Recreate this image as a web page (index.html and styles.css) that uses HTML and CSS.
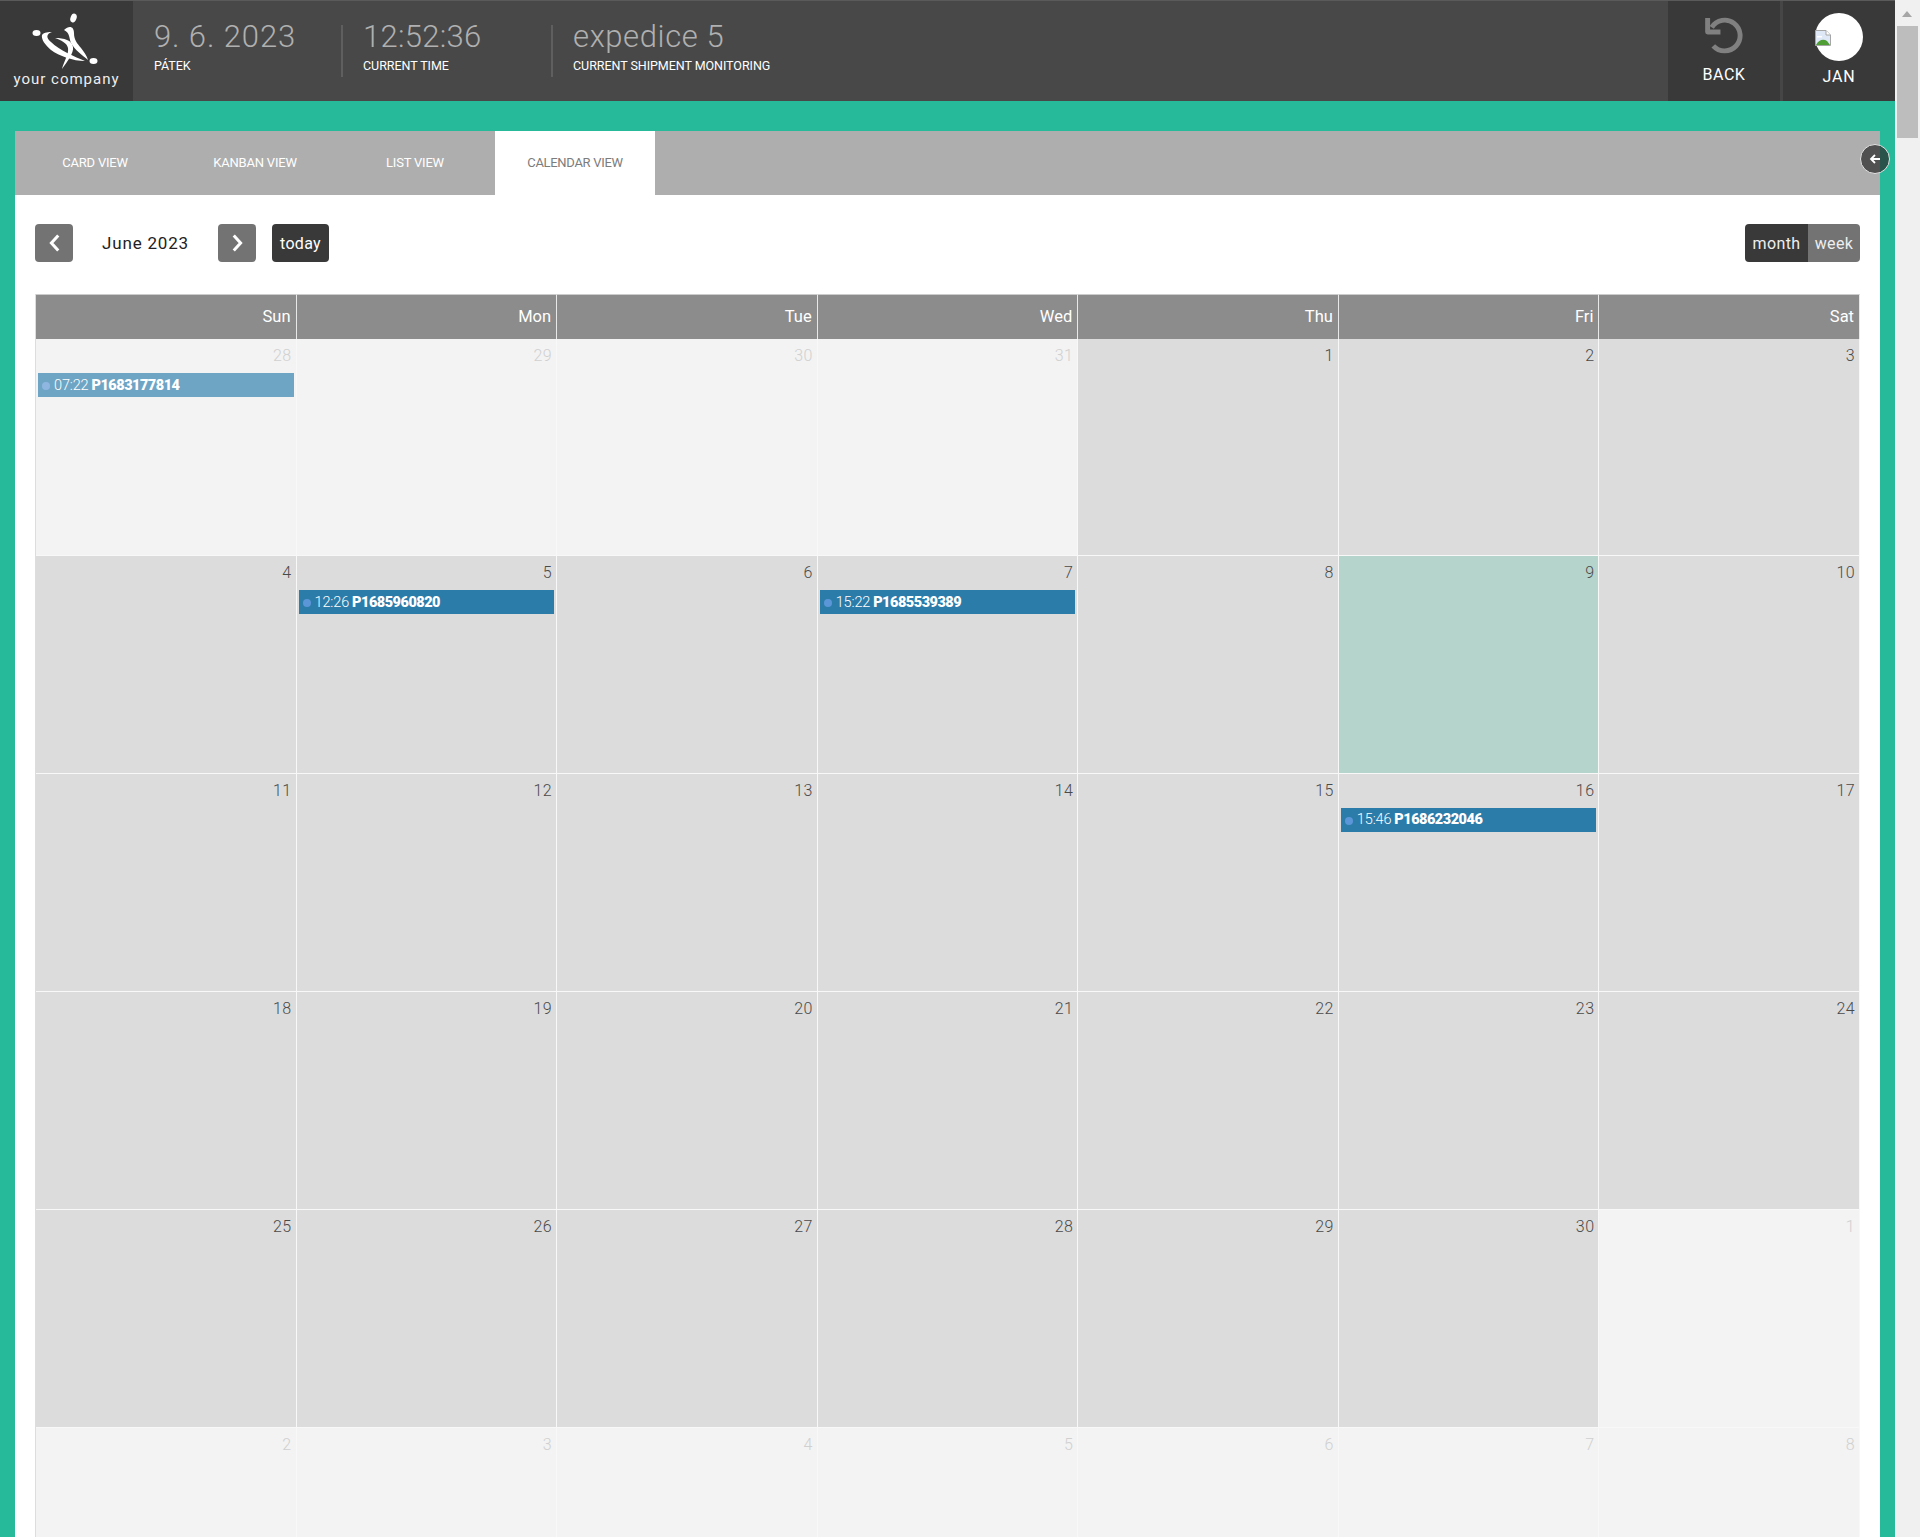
FILE: index.html
```html
<!DOCTYPE html>
<html lang="en">
<head>
<meta charset="utf-8">
<title>Calendar view</title>
<link rel="stylesheet" href="styles.css">
</head>
<body>
<div class="app">
  <div class="main">
    <header class="topbar">
      <div class="logo">
        <svg class="logo-mark" viewBox="0 0 70 56" width="70" height="56">
          <ellipse cx="42.5" cy="5" rx="3" ry="4.5" fill="#fff" transform="rotate(20 42.5 5)"/>
          <ellipse cx="5.5" cy="20" rx="4" ry="3" fill="#fff"/>
          <ellipse cx="62.5" cy="48" rx="4" ry="3" fill="#fff"/>
          <path d="M11 22 C13 19 18 19 21 19 C15 21 15 25 20 29 C28 37 44 44 54 48 C42 48 28 43 20 37 C14 32 10 26 11 22 Z" fill="#fff"/>
          <path d="M33 17 C38 12 43 13 43 20 C43 27 46 30 50 35 C53 39 56 43 57 47 C51 42 44 37 40 30 C38 25 39 20 33 17 Z" fill="#fff"/>
          <path d="M24 25 C33 25 41 27 42 34 C43 40 36 49 31 56 C33 48 38 41 37 35 C36 30 30 27 24 25 Z" fill="#fff"/>
        </svg>
        <span class="logo-text">your company</span>
      </div>
      <div class="info info-date">
        <div class="info-value">9. 6. 2023</div>
        <div class="info-label">PÁTEK</div>
      </div>
      <div class="info info-time">
        <div class="info-value">12:52:36</div>
        <div class="info-label">CURRENT TIME</div>
      </div>
      <div class="info info-line">
        <div class="info-value">expedice 5</div>
        <div class="info-label">CURRENT SHIPMENT MONITORING</div>
      </div>
      <div class="top-actions">
        <div class="action action-back">
          <svg viewBox="0 0 40 40" width="41" height="41" class="back-icon">
            <path d="M9.5 13 A15 15 0 1 1 11 31" fill="none" stroke="#808080" stroke-width="4.8"/>
            <path d="M5.5 4 V17.5 H18" fill="none" stroke="#808080" stroke-width="4.8" stroke-linejoin="round"/>
          </svg>
          <span class="action-label">BACK</span>
        </div>
        <div class="action action-user">
          <div class="avatar">
            <svg class="broken" viewBox="0 0 16 16" width="16" height="16">
              <path d="M.5.5 H11 L15.5 5 V15.5 H.5 Z" fill="#dfe8f7" stroke="#a6a6a6"/>
              <path d="M11 .5 V5 H15.5" fill="#fff" stroke="#a6a6a6"/>
              <path d="M1 15 C4 9 9 9 12 11 L15 15 Z" fill="#4f9d35"/>
              <path d="M2 6 h5 v1.5 h-5z" fill="#fff"/>
            </svg>
          </div>
          <span class="action-label">JAN</span>
        </div>
      </div>
    </header>

    <div class="content">
      <section class="panel">
        <nav class="tabs">
          <a class="tab">CARD VIEW</a>
          <a class="tab">KANBAN VIEW</a>
          <a class="tab">LIST VIEW</a>
          <a class="tab tab-active">CALENDAR VIEW</a>
        </nav>
        <button class="collapse" aria-label="Collapse">
          <svg viewBox="0 0 14 14" width="14" height="14"><path d="M12 7 H3 M7 3 L3 7 L7 11" fill="none" stroke="#fff" stroke-width="1.8"/></svg>
        </button>
        <div class="cal">
          <div class="toolbar">
            <button class="btn btn-nav"><svg viewBox="0 0 12 16" width="15" height="20"><path d="M9 2 L3.5 8 L9 14" fill="none" stroke="#fff" stroke-width="2.4"/></svg></button>
            <h2 class="cal-title">June 2023</h2>
            <button class="btn btn-nav"><svg viewBox="0 0 12 16" width="15" height="20"><path d="M3 2 L8.5 8 L3 14" fill="none" stroke="#fff" stroke-width="2.4"/></svg></button>
            <button class="btn btn-today">today</button>
            <div class="switch">
              <button class="sw sw-on">month</button>
              <button class="sw">week</button>
            </div>
          </div>
          <div class="grid">
            <div class="head">Sun</div><div class="head">Mon</div><div class="head">Tue</div><div class="head">Wed</div><div class="head">Thu</div><div class="head">Fri</div><div class="head">Sat</div>

            <div class="day off"><span class="num">28</span><div class="event past"><i class="dot"></i><span class="time">07:22</span><b>P1683177814</b></div></div>
            <div class="day off"><span class="num">29</span></div>
            <div class="day off"><span class="num">30</span></div>
            <div class="day off"><span class="num">31</span></div>
            <div class="day"><span class="num">1</span></div>
            <div class="day"><span class="num">2</span></div>
            <div class="day"><span class="num">3</span></div>

            <div class="day"><span class="num">4</span></div>
            <div class="day"><span class="num">5</span><div class="event"><i class="dot"></i><span class="time">12:26</span><b>P1685960820</b></div></div>
            <div class="day"><span class="num">6</span></div>
            <div class="day"><span class="num">7</span><div class="event"><i class="dot"></i><span class="time">15:22</span><b>P1685539389</b></div></div>
            <div class="day"><span class="num">8</span></div>
            <div class="day today"><span class="num">9</span></div>
            <div class="day"><span class="num">10</span></div>

            <div class="day"><span class="num">11</span></div>
            <div class="day"><span class="num">12</span></div>
            <div class="day"><span class="num">13</span></div>
            <div class="day"><span class="num">14</span></div>
            <div class="day"><span class="num">15</span></div>
            <div class="day"><span class="num">16</span><div class="event"><i class="dot"></i><span class="time">15:46</span><b>P1686232046</b></div></div>
            <div class="day"><span class="num">17</span></div>

            <div class="day"><span class="num">18</span></div>
            <div class="day"><span class="num">19</span></div>
            <div class="day"><span class="num">20</span></div>
            <div class="day"><span class="num">21</span></div>
            <div class="day"><span class="num">22</span></div>
            <div class="day"><span class="num">23</span></div>
            <div class="day"><span class="num">24</span></div>

            <div class="day"><span class="num">25</span></div>
            <div class="day"><span class="num">26</span></div>
            <div class="day"><span class="num">27</span></div>
            <div class="day"><span class="num">28</span></div>
            <div class="day"><span class="num">29</span></div>
            <div class="day"><span class="num">30</span></div>
            <div class="day off"><span class="num">1</span></div>

            <div class="day off"><span class="num">2</span></div>
            <div class="day off"><span class="num">3</span></div>
            <div class="day off"><span class="num">4</span></div>
            <div class="day off"><span class="num">5</span></div>
            <div class="day off"><span class="num">6</span></div>
            <div class="day off"><span class="num">7</span></div>
            <div class="day off"><span class="num">8</span></div>
          </div>
        </div>
      </section>
    </div>
  </div>
  <aside class="scrollbar">
    <div class="sb-arrow"></div>
    <div class="sb-thumb"></div>
  </aside>
</div>
</body>
</html>
```
FILE: styles.css
```css
* { box-sizing: border-box; }
html, body { margin: 0; height: 100%; overflow: hidden; }
body { font-family: Roboto, "Liberation Sans", sans-serif; color: #333; background: #f0f0f0; }
button { font-family: inherit; border: 0; padding: 0; cursor: pointer; }

.app { display: flex; height: 1537px; overflow: hidden; }
.main { flex: 1 1 auto; min-width: 0; background: #26b99a; display: flex; flex-direction: column; }

.topbar { flex: 0 0 101px; display: flex; background: #484848; border-top: 1px solid #5a5a5a; }
.logo { width: 133px; background: #393939; display: flex; flex-direction: column; align-items: center; padding-top: 12px; }
.logo-mark { display: block; margin-left: -1px; }
.logo-text { color: #eee; font-size: 15px; letter-spacing: 1px; line-height: 16px; margin-top: 2px; white-space: nowrap; }

.info { height: 52px; margin-top: 24px; }
.info-date { width: 208px; padding-left: 21px; }
.info-time { width: 210px; padding-left: 20px; border-left: 2px solid #5f5f5f; }
.info-line { padding-left: 20px; border-left: 2px solid #5f5f5f; }
.info-value { color: #b0b0b0; font-size: 31px; font-weight: 300; line-height: 34px; letter-spacing: .9px; white-space: nowrap; margin-top: -5px; }
.info-time .info-value { letter-spacing: .3px; }
.info-line .info-value { letter-spacing: .6px; }
.info-label { color: #fff; font-size: 12.5px; line-height: 14px; margin-top: 5px; letter-spacing: -.05px; white-space: nowrap; }

.top-actions { margin-left: auto; display: flex; gap: 3px; background: #464646; }
.action { width: 112px; background: #393939; color: #fff; display: flex; flex-direction: column; align-items: center; }
.action-back { padding-top: 13px; }
.back-icon { display: block; margin-left: -3px; }
.action-label { font-size: 16px; line-height: 18px; letter-spacing: .5px; }
.action-back .action-label { margin-top: 11px; }
.action-user { padding-top: 12px; }
.avatar { width: 48px; height: 48px; border-radius: 50%; background: #fff; display: flex; align-items: center; margin-left: -1px; padding-top: 2px; }
.broken { display: block; }
.action-user .action-label { margin-top: 7px; letter-spacing: .9px; }

.content { padding: 30px 15px 0; flex: 1 1 auto; min-height: 0; }
.panel { position: relative; background: #fff; height: 100%; }

.tabs { height: 64px; background: #aeaeae; display: flex; }
.tab { width: 160px; display: flex; align-items: center; justify-content: center; color: #fff; font-size: 13px; letter-spacing: -.2px; padding-bottom: 2px; }
.tab-active { background: #fff; color: #7c7c7c; letter-spacing: -.3px; }
.collapse { position: absolute; top: 13px; right: -10px; width: 30px; height: 30px; border-radius: 50%; background: rgba(45,45,45,.72); border: 1px solid #e4e4e4; display: flex; align-items: center; justify-content: center; }

.cal { padding: 29px 20px 0; }
.toolbar { display: flex; align-items: center; height: 38px; margin-bottom: 32px; }
.btn { height: 38px; border-radius: 4px; color: #fff; font-size: 16px; display: flex; align-items: center; justify-content: center; }
.btn-nav { width: 38px; background: #737373; }
.btn-today { width: 57px; background: #393939; margin-left: 16px; letter-spacing: .3px; }
.cal-title { width: 145px; margin: 0; text-align: center; font-size: 17px; font-weight: 400; color: #222; letter-spacing: .8px; }
.switch { margin-left: auto; display: flex; border-radius: 4px; overflow: hidden; height: 38px; }
.sw { background: #737373; color: #eee; font-size: 16px; width: 52px; letter-spacing: .35px; }
.sw-on { background: #393939; width: 63px; }

.grid { display: grid; grid-template-columns: repeat(7, 1fr); grid-template-rows: 45px 217px 217.5px 218px 218.5px 218px 218px; border-left: 1px solid #ddd; }
.head { background: #8c8c8c; color: #fff; font-size: 16.5px; text-align: right; padding: 13px 5px 0 0; line-height: 18px; border-top: 1px solid #ccc; border-right: 1px solid #e8e8e8; }
.day { background: #dcdcdc; border-right: 1px solid #f8f8f8; border-bottom: 1px solid #f8f8f8; padding-top: 8px; text-align: right; overflow: hidden; }
.day.off { background: #f3f3f3; }
.day.off .num { color: #d0d0d0; }
.day.today { background: #b4d4cc; }
.num { display: block; font-size: 16px; line-height: 18px; padding-right: 4px; color: #4a4a4a; font-weight: 300; letter-spacing: .4px; }
.event { margin: 8px 2px 0; height: 24px; background: #2c7caa; color: #fff; display: flex; align-items: center; padding-left: 4px; text-align: left; font-size: 14.5px; }
.event.past { background: #6ea5c5; }
.dot { width: 8px; height: 8px; border-radius: 50%; background: #5a96d8; margin-right: 4px; margin-top: 2px; }
.past .dot { background: #8fb6e0; }
.time { font-weight: 300; letter-spacing: -.15px; margin-right: 3px; }
.event b { font-weight: 900; font-size: 14.5px; letter-spacing: -.5px; }

.scrollbar { flex: 0 0 25px; background: #f0f0f0; position: relative; padding: 26px 2px 0; }
.sb-arrow { position: absolute; top: 11px; left: 7px; width: 0; height: 0; border-left: 5.5px solid transparent; border-right: 5.5px solid transparent; border-bottom: 6px solid #a6a6a6; }
.sb-thumb { height: 112px; background: #bdbdbd; }
```
